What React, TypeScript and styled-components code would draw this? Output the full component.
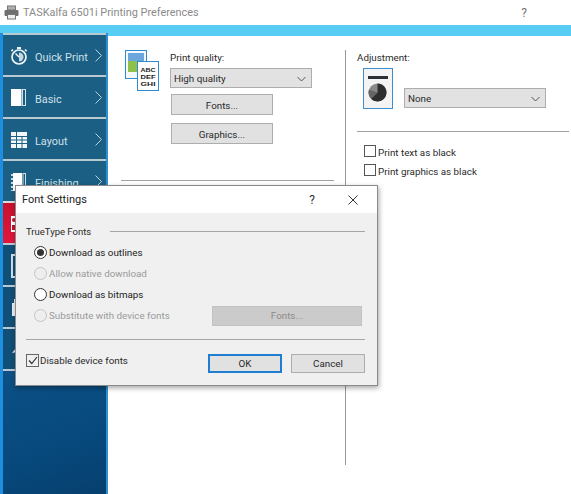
import React from "react";
import styled, { createGlobalStyle } from "styled-components";

const Global = createGlobalStyle`
  html, body { margin: 0; padding: 0; background: #fff; }
  #root { width: 571px; height: 494px; overflow: hidden; }
  * { box-sizing: border-box; }
`;

const Page = styled.div`
  position: relative;
  width: 571px;
  height: 494px;
  display: flex;
  flex-direction: column;
  font-family: Roboto, "Noto Sans", sans-serif;
  font-size: 9.8px;
  color: #2a2a2a;
  background: #fff;
  overflow: hidden;
`;

const TitleBar = styled.div`
  height: 25px;
  flex: none;
  display: flex;
  align-items: center;
  padding: 0 44px 0 4px;
  gap: 4px;
  background: #fff;
`;
const TitleText = styled.span`
  font-size: 10.9px;
  color: #8a8a8a;
  flex: 1;
`;
const TitleHelp = styled.span`
  font-size: 12px;
  color: #777;
`;

const Body = styled.div`
  flex: 1;
  display: flex;
  background: #57cdf3;
  padding-top: 1px;
  min-height: 0;
`;
const Sidebar = styled.nav`
  width: 108px;
  flex: none;
  margin-top: 7px;
  padding-left: 3px;
  display: flex;
  flex-direction: column;
  background: #1d8fe0;
  border-right: 2px solid #2f8fd2;
`;
const Item = styled.div<{ $active?: boolean; $dark?: boolean }>`
  height: 42px;
  flex: none;
  display: flex;
  align-items: center;
  padding-top: 4px;
  border-top: 2px solid ${(p) => (p.$active ? "#d9d9d9" : "#b9c9d2")};
  background: ${(p) =>
    p.$active ? "linear-gradient(#c8102e, #e0183c)" : p.$dark ? "#0f4f78" : "#1b5f84"};
  color: #cfe0e8;
  font-size: 10.9px;
  position: relative;
`;
const ItemIcon = styled.span`
  width: 31px;
  flex: none;
  display: flex;
  justify-content: center;
  margin-right: 1px;
  padding-bottom: 3px;
`;
const Chevron = styled.span`
  position: absolute;
  right: 4px;
  top: 14px;
  display: flex;
`;
const SidebarRest = styled.div`
  flex: 1;
  border-top: 2px solid #b9c9d2;
  background: linear-gradient(160deg, #0c5086 0%, #07497c 60%, #063f6e 100%);
`;

const Content = styled.main`
  flex: 1;
  min-width: 0;
  display: flex;
  background: #fff;
  margin-top: 10px;
  padding-top: 14px;
`;
const LeftColumn = styled.section`
  width: 238px;
  flex: none;
  padding: 0 11px 0 13px;
  border-right: 1px solid #9a9a9a;
  margin-bottom: 29px;
`;
const QualityRow = styled.div`
  display: flex;
  gap: 11px;
  padding-left: 4px;
`;
const Stack = styled.div`
  display: flex;
  flex-direction: column;
  width: 143px;
`;
const Label = styled.div`
  height: 18px;
  line-height: 15px;
`;
const Select = styled.div<{ $w: number }>`
  width: ${(p) => p.$w}px;
  height: 20px;
  background: #e2e2e2;
  border: 1px solid #adadad;
  display: flex;
  align-items: center;
  justify-content: space-between;
  padding: 1px 5px 0 3px;
  flex: none;
`;
const Button = styled.div`
  width: 102px;
  height: 21px;
  margin-left: 1px;
  padding-top: 1px;
  background: #e1e1e1;
  border: 1px solid #adadad;
  display: flex;
  align-items: center;
  justify-content: center;
`;
const FontsButton = styled(Button)`
  margin-top: 6px;
`;
const GraphicsButton = styled(Button)`
  margin-top: 8px;
`;
const Rule = styled.div`
  height: 1px;
  background: #a0a0a0;
  margin-top: 36px;
`;
const RightColumn = styled.section`
  flex: 1;
  min-width: 0;
  padding: 0 2px 0 11px;
`;
const AdjustRow = styled.div`
  display: flex;
  align-items: flex-end;
  gap: 11px;
  padding-left: 6px;
`;
const AdjustIcon = styled.div`
  width: 30px;
  height: 41px;
  border: 1px solid #3d8fd0;
  background: #f4f4f4;
  display: flex;
  justify-content: center;
  padding-top: 7px;
`;
const NoneSelect = styled(Select)`
  margin-bottom: 1px;
`;
const RightRule = styled.div`
  height: 1px;
  background: #a0a0a0;
  margin-top: 22px;
`;
const CheckList = styled.div`
  display: flex;
  flex-direction: column;
  gap: 7px;
  padding: 14px 0 0 7px;
`;
const Check = styled.label`
  display: flex;
  align-items: center;
  height: 12px;
  gap: 2px;
`;
const Box = styled.span`
  width: 12px;
  height: 12px;
  flex: none;
  margin-top: -2px;
  border: 1px solid #555;
  background: #fff;
`;

const Dialog = styled.div`
  position: absolute;
  left: 15px;
  top: 185px;
  width: 363px;
  height: 201px;
  background: #f0f0f0;
  border: 1px solid #8a8a8a;
  box-shadow: 1px 2px 5px rgba(0, 0, 0, 0.35);
  display: flex;
  flex-direction: column;
`;
const DialogHead = styled.div`
  height: 27px;
  flex: none;
  background: #fff;
  display: flex;
  align-items: center;
  padding: 0 19px 0 6px;
  font-size: 11px;
  color: #222;
`;
const DialogTitle = styled.span`
  flex: 1;
`;
const HeadHelp = styled.span`
  font-size: 12px;
  margin-right: 33px;
  color: #333;
`;
const DialogBody = styled.div`
  flex: 1;
  padding: 11px 12px 0 10px;
  display: flex;
  flex-direction: column;
`;
const GroupHead = styled.div`
  display: flex;
  align-items: center;
  gap: 19px;
  height: 14px;
  font-size: 9.5px;
  margin-bottom: 4px;
`;
const GroupLine = styled.div`
  flex: 1;
  height: 1px;
  background: #a5a5a5;
`;
const RadioRow = styled.div<{ $off?: boolean }>`
  height: 21px;
  display: flex;
  align-items: center;
  gap: 2px;
  padding-left: 8px;
  color: ${(p) => (p.$off ? "#9a9a9a" : "#222")};
`;
const Radio = styled.span<{ $off?: boolean }>`
  width: 13px;
  height: 13px;
  flex: none;
  border-radius: 50%;
  border: 1px solid ${(p) => (p.$off ? "#c4c4c4" : "#333")};
  background: ${(p) => (p.$off ? "#eee" : "#fff")};
  display: flex;
  align-items: center;
  justify-content: center;
`;
const RadioDot = styled.span`
  width: 7px;
  height: 7px;
  border-radius: 50%;
  background: #333;
`;
const DisabledRow = styled.div`
  display: flex;
  align-items: center;
  justify-content: space-between;
`;
const DisabledButton = styled.div`
  width: 150px;
  height: 20px;
  background: #cbcbcb;
  border: 1px solid #c2c2c2;
  color: #8c8c8c;
  display: flex;
  align-items: center;
  justify-content: center;
  margin-right: 3px;
`;
const DialogRule = styled.div`
  height: 1px;
  background: #a5a5a5;
  margin-top: 13px;
`;
const Footer = styled.div`
  display: flex;
  align-items: center;
  padding-top: 14px;
`;
const FooterCheck = styled.label`
  flex: 1;
  display: flex;
  align-items: center;
  gap: 1px;
  margin-top: -6px;
`;
const FooterBox = styled.span`
  width: 13px;
  height: 13px;
  border: 1px solid #666;
  display: flex;
  align-items: center;
  justify-content: center;
`;
const DialogButton = styled.div<{ $primary?: boolean }>`
  width: 74px;
  height: 19px;
  margin-left: 9px;
  background: #e1e1e1;
  border: ${(p) => (p.$primary ? "2px solid #1f7ed0" : "1px solid #adadad")};
  display: flex;
  align-items: center;
  justify-content: center;
`;

const Caret = () => (
  <svg width="9" height="6" viewBox="0 0 9 6">
    <path d="M.5 1 4.5 5 8.5 1" fill="none" stroke="#555" strokeWidth="1" />
  </svg>
);
const Next = () => (
  <svg width="7" height="13" viewBox="0 0 7 13">
    <path d="M.5.5 6.5 6.5.5 12.5" fill="none" stroke="#b7d3e0" strokeWidth="1" />
  </svg>
);
const PrinterIcon = () => (
  <svg width="15" height="15" viewBox="0 0 15 15">
    <rect x="3.5" y="1" width="8" height="4" fill="#b0b0b0" stroke="#777" />
    <rect x="0.5" y="5" width="14" height="6" rx="1" fill="#6f6f6f" />
    <rect x="3.5" y="9.5" width="8" height="4.5" fill="#eee" stroke="#777" />
  </svg>
);
const Stopwatch = () => (
  <svg width="18" height="18" viewBox="0 0 18 18">
    <circle cx="9" cy="10" r="7" fill="none" stroke="#f2f6f8" strokeWidth="1.7" />
    <rect x="7" y="0" width="4" height="2" fill="#f2f6f8" />
    <path d="M15 2.5 16.6 4.1M3 2.5 1.4 4.1" stroke="#f2f6f8" strokeWidth="1.5" />
    <path d="M9 10 5.5 6.5" stroke="#f2f6f8" strokeWidth="1.4" />
    <path d="M9 10V5.5A4.5 4.5 0 0 1 9 14.5Z" fill="#f2f6f8" opacity="0.8" />
  </svg>
);
const BookIcon = () => (
  <svg width="15" height="17" viewBox="0 0 15 17">
    <rect x="0" y="0" width="10.5" height="17" fill="#fff" />
    <rect x="11.5" y="0.5" width="3" height="16" fill="none" stroke="#cfe0e8" strokeWidth="1" />
  </svg>
);
const GridIcon = () => (
  <svg width="16" height="16" viewBox="0 0 16 16">
    <rect width="16" height="16" fill="#f4f7f9" />
    <path d="M0 4.5H16M0 8H16M0 11.5H16" stroke="#1b5f84" strokeWidth="1" />
    <path d="M5.5 0V16M11 4V16" stroke="#1b5f84" strokeWidth="1" />
  </svg>
);
const FinishIcon = () => (
  <svg width="15" height="18" viewBox="0 0 15 18">
    <rect x="2" y="0" width="9" height="18" fill="#fff" />
    <path d="M1 1V18" stroke="#fff" strokeWidth="1.5" strokeDasharray="2 2" />
    <rect x="12" y="0.5" width="2.5" height="17" fill="none" stroke="#cfe0e8" strokeWidth="1" />
  </svg>
);
const ColorIcon = () => (
  <svg width="15" height="16" viewBox="0 0 15 16">
    <rect x="0" y="0" width="15" height="16" fill="#fff" />
    <circle cx="3" cy="4" r="2" fill="#c8102e" />
    <rect x="1" y="9" width="4" height="5" fill="#c8102e" />
  </svg>
);
const FrameIcon = () => (
  <svg width="15" height="24" viewBox="0 0 15 24">
    <rect x="1" y="1" width="13" height="22" fill="none" stroke="#cfe0e8" strokeWidth="2" />
  </svg>
);
const StackIcon = () => (
  <svg width="15" height="17" viewBox="0 0 15 17">
    <rect x="1" y="4" width="13" height="13" fill="#e8eff3" />
    <rect x="3" y="0" width="3" height="4" fill="#e8eff3" />
  </svg>
);
const PenIcon = () => (
  <svg width="15" height="8" viewBox="0 0 15 8">
    <path d="M1 7 5 2 6 6Z" fill="#dfe8ee" />
    <path d="M5 5 14 0" stroke="#dfe8ee" strokeWidth="2" />
  </svg>
);
const QualityIcon = () => (
  <svg width="34" height="41" viewBox="0 0 34 41">
    <rect x="0.5" y="0.5" width="21" height="28" fill="#f4f8fb" stroke="#2f8ad0" />
    <rect x="3" y="3" width="16" height="8" fill="#6ba6dc" />
    <rect x="3" y="11" width="16" height="11" fill="#8fc04a" />
    <rect x="12.5" y="11.5" width="21" height="29" fill="#fff" stroke="#2f8ad0" />
    <text x="23" y="21.5" fontFamily="Liberation Sans" fontSize="6.2" fontWeight="700" textAnchor="middle" textLength="15" lengthAdjust="spacingAndGlyphs" fill="#222">ABC</text>
    <text x="23" y="28.7" fontFamily="Liberation Sans" fontSize="6.2" fontWeight="700" textAnchor="middle" textLength="15" lengthAdjust="spacingAndGlyphs" fill="#222">DEF</text>
    <text x="23" y="35.9" fontFamily="Liberation Sans" fontSize="6.2" fontWeight="700" textAnchor="middle" textLength="15" lengthAdjust="spacingAndGlyphs" fill="#222">GHI</text>
  </svg>
);
const PieIcon = () => (
  <svg width="20" height="27" viewBox="0 0 20 27">
    <rect x="0" y="0" width="20" height="3" fill="#2b2f36" />
    <circle cx="9.5" cy="16.5" r="9" fill="#8a8a8a" />
    <path d="M9.5 16.5V7.5A9 9 0 1 1 3 22.7Z" fill="#2e2e2e" />
    <path d="M9.5 16.5 1 13.5A9 9 0 0 0 3 22.7Z" fill="#666" />
  </svg>
);
const Tick = () => (
  <svg width="10" height="9" viewBox="0 0 10 9">
    <path d="M1 4.5 3.8 7.5 9 1" fill="none" stroke="#333" strokeWidth="1.2" />
  </svg>
);
const CloseX = () => (
  <svg width="10" height="10" viewBox="0 0 10 10">
    <path d="M.5.5 9.5 9.5M9.5.5.5 9.5" stroke="#333" strokeWidth="1" />
  </svg>
);

type NavItem = { label?: string; icon: React.ReactNode; active?: boolean; dark?: boolean };
const items: NavItem[] = [
  { label: "Quick Print", icon: <Stopwatch /> },
  { label: "Basic", icon: <BookIcon /> },
  { label: "Layout", icon: <GridIcon /> },
  { label: "Finishing", icon: <FinishIcon /> },
  { icon: <ColorIcon />, active: true },
  { icon: <FrameIcon />, dark: true },
  { icon: <StackIcon />, dark: true },
  { icon: <PenIcon />, dark: true },
];

export default function App() {
  return (
    <Page>
      <Global />
      <TitleBar>
        <PrinterIcon />
        <TitleText>TASKalfa 6501i Printing Preferences</TitleText>
        <TitleHelp>?</TitleHelp>
      </TitleBar>
      <Body>
        <Sidebar>
          {items.map((it, i) => (
            <Item key={i} $active={it.active} $dark={it.dark}>
              <ItemIcon>{it.icon}</ItemIcon>
              {it.label}
              {it.label && (
                <Chevron>
                  <Next />
                </Chevron>
              )}
            </Item>
          ))}
          <SidebarRest />
        </Sidebar>
        <Content>
          <LeftColumn>
            <QualityRow>
              <QualityIcon />
              <Stack>
                <Label>Print quality:</Label>
                <Select $w={142}>
                  High quality
                  <Caret />
                </Select>
                <FontsButton>Fonts...</FontsButton>
                <GraphicsButton>Graphics...</GraphicsButton>
              </Stack>
            </QualityRow>
            <Rule />
          </LeftColumn>
          <RightColumn>
            <Label>Adjustment:</Label>
            <AdjustRow>
              <AdjustIcon>
                <PieIcon />
              </AdjustIcon>
              <NoneSelect $w={142}>
                None
                <Caret />
              </NoneSelect>
            </AdjustRow>
            <RightRule />
            <CheckList>
              <Check>
                <Box />
                Print text as black
              </Check>
              <Check>
                <Box />
                Print graphics as black
              </Check>
            </CheckList>
          </RightColumn>
        </Content>
      </Body>
      <Dialog>
        <DialogHead>
          <DialogTitle>Font Settings</DialogTitle>
          <HeadHelp>?</HeadHelp>
          <CloseX />
        </DialogHead>
        <DialogBody>
          <GroupHead>
            TrueType Fonts
            <GroupLine />
          </GroupHead>
          <RadioRow>
            <Radio>
              <RadioDot />
            </Radio>
            Download as outlines
          </RadioRow>
          <RadioRow $off>
            <Radio $off />
            Allow native download
          </RadioRow>
          <RadioRow>
            <Radio />
            Download as bitmaps
          </RadioRow>
          <DisabledRow>
            <RadioRow $off>
              <Radio $off />
              Substitute with device fonts
            </RadioRow>
            <DisabledButton>Fonts...</DisabledButton>
          </DisabledRow>
          <DialogRule />
          <Footer>
            <FooterCheck>
              <FooterBox>
                <Tick />
              </FooterBox>
              Disable device fonts
            </FooterCheck>
            <DialogButton $primary>OK</DialogButton>
            <DialogButton>Cancel</DialogButton>
          </Footer>
        </DialogBody>
      </Dialog>
    </Page>
  );
}
